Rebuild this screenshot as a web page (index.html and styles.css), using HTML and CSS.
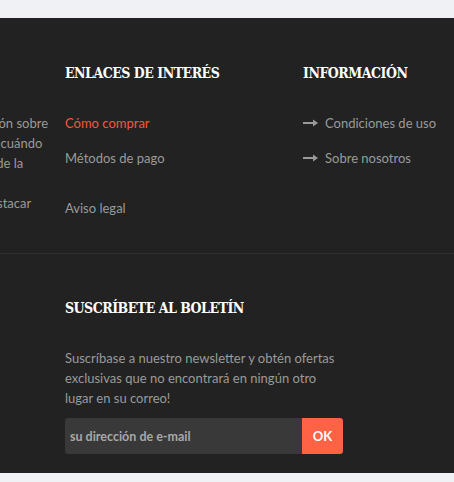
FILE: index.html
```
<!DOCTYPE html>
<html lang="es">

<head>
    <meta charset="UTF-8">
    <meta name="viewport" content="width=device-width, initial-scale=1">
    <title>Footer</title>
    <link rel="stylesheet" href="styles.css">
</head>

<body>
    <footer class="footer">
        <div class="footer-top">
            <div class="row">
                <div class="col">
                    <p class="about">
                        <span class="line">Reciba siempre toda información sobre</span>
                        <span class="line">nuestras nuevas colecciones y cuándo</span>
                        <span class="line">estarán disponibles en tienda de la</span>
                        <span class="line">&nbsp;</span>
                        <span class="line">a la venta. Todo lo que vale destacar</span>
                    </p>
                </div>
                <div class="col">
                    <h3 class="footer-title">ENLACES DE INTERÉS</h3>
                    <ul class="links">
                        <li><a class="active" href="#">Cómo comprar</a></li>
                        <li><a href="#">Métodos de pago</a></li>
                        <li class="spaced"><a href="#">Aviso legal</a></li>
                    </ul>
                </div>
                <div class="col">
                    <h3 class="footer-title">INFORMACIÓN</h3>
                    <ul class="links">
                        <li>
                            <a href="#">
                                <svg class="arrow" width="15" height="8" viewBox="0 0 15 8">
                                    <path d="M0 4h12" stroke="#9a9a9a" stroke-width="2" />
                                    <path d="M10 0.5L15 4L10 7.5Z" fill="#9a9a9a" />
                                </svg>Condiciones de uso
                            </a>
                        </li>
                        <li>
                            <a href="#">
                                <svg class="arrow" width="15" height="8" viewBox="0 0 15 8">
                                    <path d="M0 4h12" stroke="#9a9a9a" stroke-width="2" />
                                    <path d="M10 0.5L15 4L10 7.5Z" fill="#9a9a9a" />
                                </svg>Sobre nosotros
                            </a>
                        </li>
                    </ul>
                </div>
            </div>
        </div>
        <div class="footer-bottom">
            <div class="newsletter">
                <h3 class="footer-title">SUSCRÍBETE AL BOLETÍN</h3>
                <p class="news-text">Suscríbase a nuestro newsletter y obtén ofertas exclusivas que no encontrará en ningún otro lugar en su correo!</p>
                <form class="news-form">
                    <input type="text" placeholder="su dirección de e-mail">
                    <button type="button">OK</button>
                </form>
            </div>
        </div>
    </footer>
</body>

</html>
```

FILE: styles.css
```
/* Page */
body {
    margin: 0;
    padding: 18px 0 8px;
    background-color: #f0f1f4;
    font-family: Lato, sans-serif;
}

/* Footer */
.footer {
    background-color: #222222;
    overflow: hidden;
    color: #9a9a9a;
    font-size: 13px;
    line-height: 20px;
}

.footer-top {
    padding: 45px 0 35px;
    border-bottom: 1px solid #2f2f2f;
}

.row {
    display: flex;
    margin-left: -173px;
}

.col {
    width: 238px;
    flex: none;
}

.footer-title {
    margin: 0;
    font-family: "DejaVu Serif", serif;
    font-stretch: condensed;
    font-weight: bold;
    font-size: 14px;
    line-height: 20px;
    color: #ffffff;
    letter-spacing: -0.5px;
}

.about {
    margin: 50px 0 0;
    white-space: nowrap;
}

.about .line {
    display: block;
}

.links {
    list-style: none;
    margin: 30px 0 0;
    padding: 0;
}

.links li {
    margin-bottom: 15px;
}

.links li:last-child {
    margin-bottom: 0;
}

.links li.spaced {
    margin-top: 30px;
}

.links a {
    display: flex;
    align-items: center;
    color: #9a9a9a;
    text-decoration: none;
}

.links a.active {
    color: #f4573c;
}

.arrow {
    margin-right: 7px;
}

/* Newsletter */
.footer-bottom {
    padding: 44px 0 19px 65px;
}

.newsletter {
    width: 280px;
}

.news-text {
    margin: 30px 0 10px;
}

.news-form {
    display: flex;
    width: 278px;
    height: 36px;
}

.news-form input {
    flex: 1;
    min-width: 0;
    border: 0;
    border-radius: 3px 0 0 3px;
    background-color: #393939;
    padding: 0 5px;
    font-family: inherit;
    font-size: 12.5px;
    font-weight: bold;
    color: #ccc;
}

.news-form input::placeholder {
    color: #a8a8a8;
}

.news-form button {
    width: 41px;
    border: 0;
    border-radius: 0 3px 3px 0;
    background-color: #ff6245;
    color: #ffffff;
    font-family: inherit;
    font-weight: bold;
    font-size: 13px;
}
```
